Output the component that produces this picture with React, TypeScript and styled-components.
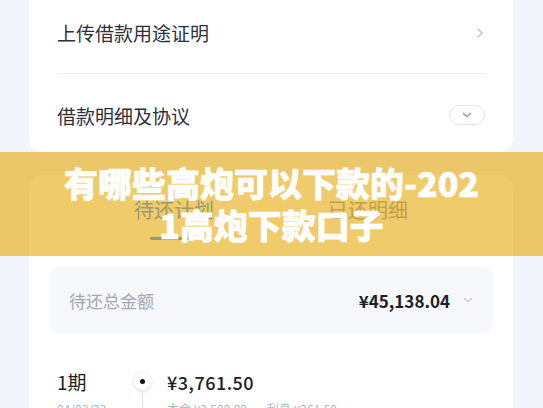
import React from "react";
import styled, { createGlobalStyle } from "styled-components";

const Global = createGlobalStyle`
  html, body { margin: 0; padding: 0; }
  body {
    background: #f2f5fb;
    font-family: "Noto Sans CJK SC", "Noto Sans", sans-serif;
    overflow: hidden;
  }
`;

const Page = styled.div`
  position: relative;
  width: 543px;
  height: 408px;
  overflow: hidden;
  padding: 0 30px 0 29px;
  box-sizing: border-box;
  display: flex;
  flex-direction: column;
  gap: 23px;
`;

const TopCard = styled.div`
  background: #fff;
  border-radius: 0 0 14px 14px;
  padding: 0 28px;
  display: flex;
  flex-direction: column;
`;

const Row = styled.div<{ $h: number; $divider?: boolean; $shift: number }>`
  height: ${(p) => p.$h}px;
  display: flex;
  align-items: center;
  justify-content: space-between;
  border-bottom: ${(p) => (p.$divider ? "1px solid #eceef2" : "none")};
  box-sizing: border-box;
  padding-bottom: ${(p) => (p.$shift > 0 ? p.$shift : 0)}px;
  padding-top: ${(p) => (p.$shift < 0 ? -p.$shift : 0)}px;
`;

const RowLabel = styled.span`
  font-size: 19px;
  color: #2b303b;
`;

const Chevron = styled.svg`
  width: 8px;
  height: 12px;
  margin-right: 1px;
`;

const Pill = styled.div`
  width: 36px;
  height: 20px;
  border: 1px solid #e3e5ee;
  border-radius: 10px;
  box-sizing: border-box;
  display: flex;
  align-items: center;
  justify-content: center;
`;

const Card = styled.div`
  background: #fff;
  border-radius: 14px 14px 0 0;
  flex: 1;
  display: flex;
  flex-direction: column;
`;

const Tabs = styled.div`
  display: grid;
  grid-template-columns: 194px 194px;
  justify-content: center;
  height: 66px;
`;

const Tab = styled.div<{ $active?: boolean }>`
  position: relative;
  display: flex;
  justify-content: center;
  padding-top: 21px;
  font-size: 20px;
  line-height: 28px;
  color: ${(p) => (p.$active ? "#1f86ff" : "#8e93a0")};
  &::after {
    content: "";
    display: ${(p) => (p.$active ? "block" : "none")};
    position: absolute;
    top: 62px;
    left: 50%;
    width: 48px;
    height: 3px;
    margin-left: -24px;
    border-radius: 2px;
    background: #1f86ff;
  }
`;

const SumBox = styled.div`
  margin: 26px 20px 0 21px;
  height: 66px;
  border-radius: 9px;
  background: #f6f8fc;
  padding: 0 20px 0 19px;
  display: flex;
  align-items: center;
  justify-content: space-between;
`;

const SumLabel = styled.span`
  font-size: 17px;
  color: #a3a7b1;
`;

const SumValue = styled.span`
  display: flex;
  align-items: center;
  gap: 13px;
  font-size: 17px;
  font-weight: 700;
  color: #1d2029;
`;

const Period = styled.div`
  display: grid;
  grid-template-columns: 77px 33px 1fr;
  align-items: center;
  height: 24px;
  margin-top: 35px;
  padding: 0 28px;
`;

const PeriodName = styled.span`
  font-size: 19px;
  color: #1d2029;
`;

const DotCol = styled.div`
  position: relative;
  height: 24px;
  display: flex;
  align-items: center;
`;

const Dot = styled.div`
  width: 17px;
  height: 17px;
  border-radius: 50%;
  background: #fff;
  box-shadow: 0 1px 4px rgba(80, 100, 160, 0.25);
  display: flex;
  align-items: center;
  justify-content: center;
  &::after {
    content: "";
    width: 5px;
    height: 5px;
    border-radius: 50%;
    background: #111;
  }
`;

const Line = styled.div`
  position: absolute;
  left: 8px;
  top: 21px;
  width: 1px;
  height: 40px;
  background: #dfe2e8;
`;

const Amount = styled.span`
  font-size: 18px;
  font-weight: 500;
  color: #1d2029;
  letter-spacing: 0.5px;
`;

const SubRow = styled.div`
  display: grid;
  grid-template-columns: 110px 1fr;
  padding: 8px 28px 0;
  font-size: 12px;
  line-height: 17px;
  color: #b3b7c0;
`;

const SubText = styled.span`
  display: flex;
  gap: 20px;
`;

const Banner = styled.div`
  position: absolute;
  left: 0;
  right: 0;
  top: 152px;
  height: 104px;
  background: rgba(230, 168, 10, 0.6);
  display: flex;
  align-items: center;
  padding: 0 60px;
  box-sizing: border-box;
`;

const Title = styled.h1`
  margin: 0;
  width: 100%;
  text-align: center;
  color: #fff;
  font-family: "Noto Sans CJK SC", "Noto Sans", sans-serif;
  font-weight: 900;
  font-size: 34px;
  line-height: 42px;
  word-break: break-all;
  -webkit-text-stroke: 0.6px #fff;
`;

export default function App() {
  return (
    <>
      <Global />
      <Page>
        <TopCard>
          <Row $h={74} $shift={8} $divider>
            <RowLabel>上传借款用途证明</RowLabel>
            <Chevron viewBox="0 0 8 12">
              <path d="M2 2l4 4-4 4" fill="none" stroke="#c3c7d0" strokeWidth="1.6" strokeLinecap="round" strokeLinejoin="round" />
            </Chevron>
          </Row>
          <Row $h={78} $shift={-4}>
            <RowLabel>借款明细及协议</RowLabel>
            <Pill>
              <svg width="10" height="6" viewBox="0 0 10 6">
                <path d="M1.5 1.5l3.5 3 3.5-3" fill="none" stroke="#a9adbb" strokeWidth="1.8" strokeLinecap="round" strokeLinejoin="round" />
              </svg>
            </Pill>
          </Row>
        </TopCard>
        <Card>
          <Tabs>
            <Tab $active>待还计划</Tab>
            <Tab>已还明细</Tab>
          </Tabs>
          <SumBox>
            <SumLabel>待还总金额</SumLabel>
            <SumValue>
              ¥45,138.04
              <svg width="10" height="6" viewBox="0 0 10 6">
                <path d="M1.5 1.5l3.5 3 3.5-3" fill="none" stroke="#c9ccd4" strokeWidth="1.3" strokeLinecap="round" strokeLinejoin="round" />
              </svg>
            </SumValue>
          </SumBox>
          <Period>
            <PeriodName>1期</PeriodName>
            <DotCol>
              <Dot />
              <Line />
            </DotCol>
            <Amount>¥3,761.50</Amount>
          </Period>
          <SubRow>
            <span>04/03/23</span>
            <SubText>
              <span>本金 ¥3,500.00</span>
              <span>利息 ¥261.50</span>
            </SubText>
          </SubRow>
        </Card>
        <Banner>
          <Title>有哪些高炮可以下款的-2021高炮下款口子</Title>
        </Banner>
      </Page>
    </>
  );
}
